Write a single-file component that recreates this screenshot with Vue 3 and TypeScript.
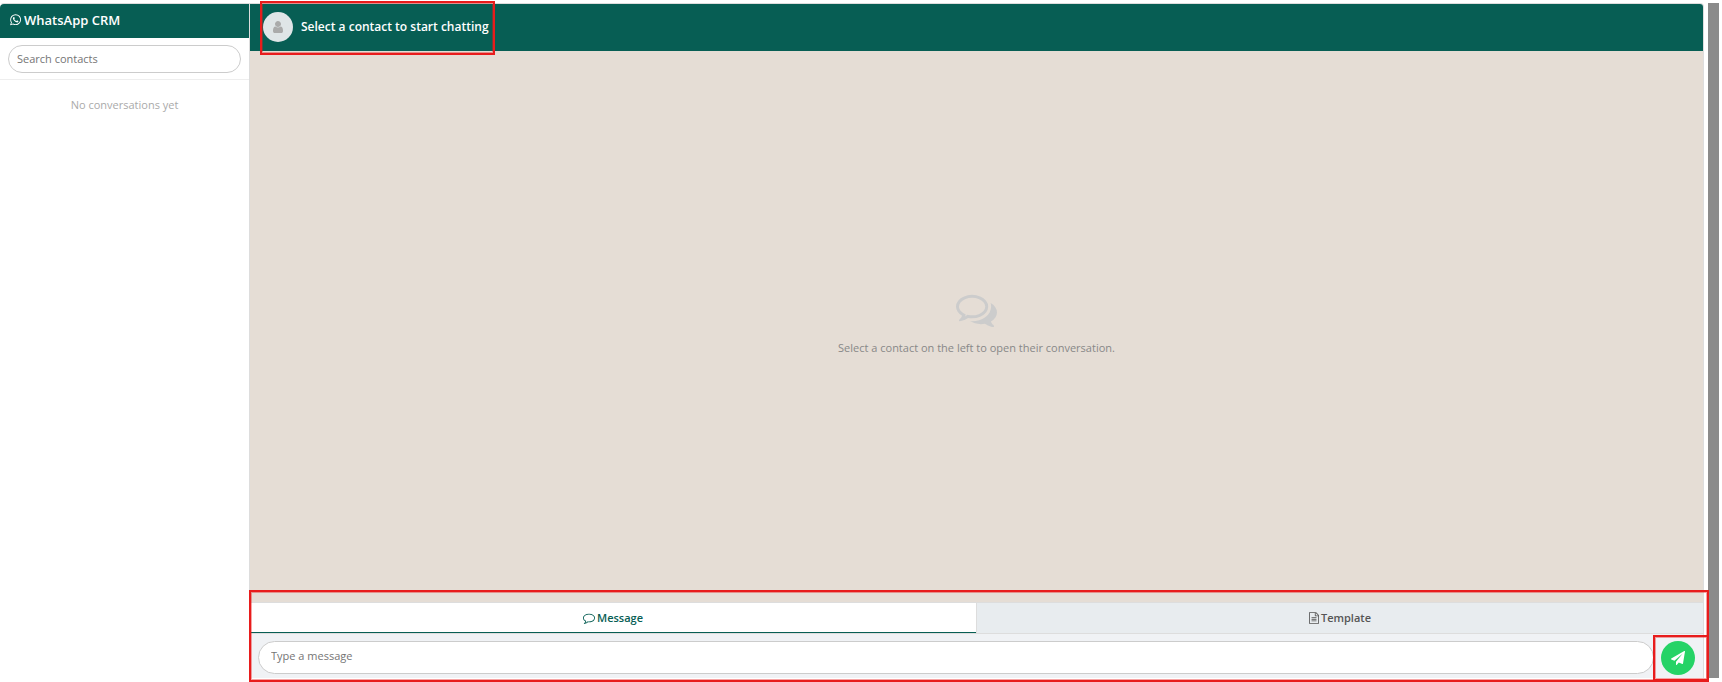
<script setup lang="ts">
import { ref } from 'vue'

type Tab = 'message' | 'template'

const search = ref('')
const draft = ref('')
const activeTab = ref<Tab>('message')
</script>

<template>
  <div class="page">
    <div class="crm">
      <aside class="sidebar">
        <h1 class="brand">
          <svg class="brand-icon" viewBox="0 0 1536 1792" aria-hidden="true">
            <path d="M985 878q13 0 97.5 44t89.5 53q2 5 2 15 0 33-17 76-16 39-71 65.5t-102 26.5q-57 0-190-62-98-45-170-118t-148-185q-72-107-71-194v-8q3-91 74-158 24-22 52-22 6 0 18 1.5t19 1.5q19 0 26.5 6.5t15.5 27.5q8 20 33 88t25 75q0 21-34.5 57.5t-34.5 46.5q0 7 5 15 34 73 102 137 56 53 151 101 12 7 22 7 15 0 54-48.5t52-48.5zm-203 530q127 0 243.5-50t200.5-134 134-200.5 50-243.5-50-243.5-134-200.5-200.5-134-243.5-50-243.5 50-200.5 134-134 200.5-50 243.5q0 203 120 368l-79 233 242-77q158 104 345 104zm0-1382q153 0 292.5 60t240.5 161 161 240.5 60 292.5-60 292.5-161 240.5-240.5 161-292.5 60q-195 0-365-94l-417 134 136-405q-108-178-108-389 0-153 60-292.5t161-240.5 240.5-161 292.5-60z" />
          </svg>
          WhatsApp CRM
        </h1>
        <div class="search">
          <input v-model="search" type="text" placeholder="Search contacts" aria-label="Search contacts" />
        </div>
        <p class="no-items">No conversations yet</p>
      </aside>

      <main class="chat">
        <header class="chat-header">
          <div class="contact">
            <span class="avatar">
              <svg viewBox="0 0 1792 1792" aria-hidden="true">
                <path d="M1536 1399q0 109-62.5 187t-150.5 78h-854q-88 0-150.5-78t-62.5-187q0-85 8.5-160.5t31.5-152 58.5-131 94-89 134.5-34.5q131 128 313 128t313-128q76 0 134.5 34.5t94 89 58.5 131 31.5 152 8.5 160.5zm-256-887q0 159-112.5 271.5t-271.5 112.5-271.5-112.5-112.5-271.5 112.5-271.5 271.5-112.5 271.5 112.5 112.5 271.5z" />
              </svg>
            </span>
            <h2>Select a contact to start chatting</h2>
            <span class="mark mark-contact"></span>
          </div>
        </header>

        <section class="thread">
          <svg class="thread-icon" viewBox="0 0 1792 1792" aria-hidden="true">
            <path d="M704 384q-153 0-286 52t-211.5 141-78.5 191q0 82 53 158t149 132l97 56-35 84q34-20 62-39l44-31 53 10q78 14 153 14 153 0 286-52t211.5-141 78.5-191-78.5-191-211.5-141-286-52zm0-128q191 0 353.5 68.5t256.5 186.5 94 257-94 257-256.5 186.5-353.5 68.5q-86 0-176-16-124 88-278 128-36 9-86 16h-3q-11 0-20.5-8t-11.5-21q-1-3-1-6.5t.5-6.5 2-6l2.5-5 3.5-5.5 4-5 4.5-5 4-4.5q5-6 23-25t26-29.5 22.5-29 25-38.5 20.5-44q-124-72-195-177t-71-224q0-139 94-257t256.5-186.5 353.5-68.5zm822 1169q10 24 20.5 44t25 38.5 22.5 29 26 29.5 23 25q1 1 4 4.5t4.5 5 4 5 3.5 5.5l2.5 5 2 6 .5 6.5-1 6.5q-3 14-13 22t-22 7q-50-7-86-16-154-40-278-128-90 16-176 16-271 0-472-132 58 4 88 4 161 0 309-45t264-129q125-92 192-212t67-254q0-77-23-152 129 71 204 178t75 230q0 120-71 224.5t-195 176.5z" />
          </svg>
          <p>Select a contact on the left to open their conversation.</p>
        </section>

        <footer class="footer">
          <div class="tabs" role="tablist">
            <button
              type="button"
              role="tab"
              class="tab"
              :class="{ active: activeTab === 'message' }"
              :aria-selected="activeTab === 'message'"
              @click="activeTab = 'message'"
            >
              <svg class="tab-icon" viewBox="0 0 1792 1792" aria-hidden="true">
                <path d="M896 384q-204 0-381.5 69.5t-282 187.5-104.5 255q0 112 71.5 213.5t201.5 175.5l87 50-27 96q-24 91-70 172 152-63 275-171l43-38 57 6q69 8 130 8 204 0 381.5-69.5t282-187.5 104.5-255-104.5-255-282-187.5-381.5-69.5zm896 512q0 174-120 321.5t-326 233-450 85.5q-70 0-145-8-198 175-460 242-49 14-114 22h-5q-15 0-27-10.5t-16-27.5v-1q-3-4-.5-12t2-10 4.5-9.5l6-9 7-8.5 8-9q7-8 31-34.5t34.5-38 31-39.5 32.5-51 27-59 26-76q-157-89-247.5-220t-90.5-281q0-130 71-248.5t191-204.5 286-136.5 348-50.5 348 50.5 286 136.5 191 204.5 71 248.5z" />
              </svg>
              Message
            </button>
            <button
              type="button"
              role="tab"
              class="tab"
              :class="{ active: activeTab === 'template' }"
              :aria-selected="activeTab === 'template'"
              @click="activeTab = 'template'"
            >
              <svg class="tab-icon narrow" viewBox="128 0 1536 1792" aria-hidden="true">
                <path d="M1596 380q28 28 48 76t20 88v1152q0 40-28 68t-68 28h-1344q-40 0-68-28t-28-68v-1600q0-40 28-68t68-28h896q40 0 88 20t76 48zm-444-244v376h376q-10-29-22-41l-313-313q-12-12-41-22zm384 1528v-1024h-416q-40 0-68-28t-28-68v-416h-768v1536h1280zm-1024-864q0-14 9-23t23-9h704q14 0 23 9t9 23v64q0 14-9 23t-23 9h-704q-14 0-23-9t-9-23v-64zm736 224q14 0 23 9t9 23v64q0 14-9 23t-23 9h-704q-14 0-23-9t-9-23v-64q0-14 9-23t23-9h704zm0 256q14 0 23 9t9 23v64q0 14-9 23t-23 9h-704q-14 0-23-9t-9-23v-64q0-14 9-23t23-9h704z" />
              </svg>
              Template
            </button>
          </div>
          <form class="composer" @submit.prevent="draft = ''">
            <input v-model="draft" type="text" placeholder="Type a message" aria-label="Type a message" />
            <button type="submit" class="send" aria-label="Send message">
              <svg viewBox="0 0 1792 1792" aria-hidden="true">
                <path d="M1764 11q33 24 27 64l-256 1536q-5 29-32 45-14 8-31 8-11 0-24-5l-453-185-242 295q-18 23-49 23-13 0-22-4-19-7-30.5-23.5t-11.5-36.5v-349l864-1059-1069 925-395-162q-37-14-40-55-2-40 32-59l1664-960q15-9 32-9 20 0 36 11z" />
              </svg>
            </button>
            <span class="mark mark-send"></span>
          </form>
          <span class="mark mark-footer"></span>
        </footer>
      </main>
    </div>
    <div class="scrollbar"></div>
  </div>
</template>

<style>
body {
  margin: 0;
  background: #fff;
}
</style>

<style scoped>
.page {
  box-sizing: border-box;
  display: flex;
  gap: 4px;
  height: 100vh;
  padding: 3px 3px 4px 0;
  font-family: "Open Sans", "Noto Sans", sans-serif;
  font-size: 12px;
  line-height: 18px;
  color: #555;
}

.page * {
  box-sizing: border-box;
}

svg {
  display: block;
  flex: none;
  fill: currentColor;
}

h1,
h2,
p {
  margin: 0;
}

input {
  min-width: 0;
  border: 1px solid #ccc;
  background: #fff;
  font: inherit;
  color: #333;
  outline: none;
}

input::placeholder {
  color: #757575;
  opacity: 1;
}

button {
  margin: 0;
  font: inherit;
  cursor: pointer;
}

.crm {
  flex: 1;
  display: flex;
  min-width: 0;
  border: 1px solid #ddd;
  border-width: 1px 1px 0 0;
  border-radius: 4px 4px 0 0;
}

.sidebar {
  flex: none;
  width: 250px;
  border-right: 1px solid #ddd;
  background: #fff;
}

.brand {
  display: flex;
  align-items: center;
  gap: 3px;
  height: 34px;
  padding: 0 10px 2px;
  border-top-left-radius: 4px;
  background: #075e54;
  color: #fff;
  font-size: 13px;
  font-weight: 600;
}

.brand-icon {
  width: 11px;
  height: 13px;
}

.search {
  display: flex;
  padding: 7px 8px 6px;
  border-bottom: 1px solid #eee;
}

.search input {
  width: 100%;
  height: 28px;
  padding: 0 8px 2px;
  border-radius: 14px;
  font-size: 11px;
}

.no-items {
  padding: 16px 8px;
  color: #aaa;
  font-size: 11px;
  text-align: center;
}

.chat {
  flex: 1;
  display: flex;
  flex-direction: column;
  min-width: 0;
}

.chat-header {
  display: flex;
  align-items: center;
  height: 47px;
  padding: 0 13px 1px;
  border-top-right-radius: 3px;
  background: #075e54;
  color: #fff;
}

.contact {
  position: relative;
  display: flex;
  align-items: center;
  gap: 8px;
}

.contact h2 {
  font-size: 12px;
  font-weight: 600;
}

.avatar {
  display: flex;
  align-items: center;
  justify-content: center;
  width: 30px;
  height: 30px;
  border-radius: 50%;
  background: #dfe5e7;
  color: #aaa;
}

.avatar svg {
  width: 14px;
  height: 14px;
}

.thread {
  flex: 1;
  display: flex;
  flex-direction: column;
  align-items: center;
  justify-content: center;
  gap: 9px;
  padding-bottom: 7px;
  background: #e5ddd5;
  color: #888;
  font-size: 11px;
}

.thread-icon {
  width: 41px;
  height: 41px;
  color: #ccc;
}

.footer {
  position: relative;
  background: #f0f2f5;
}

.tabs {
  display: flex;
  border-top: 1px solid #ddd;
  border-bottom: 1px solid #ddd;
}

.tab {
  flex: 1;
  display: flex;
  align-items: center;
  justify-content: center;
  gap: 2px;
  height: 30px;
  padding: 0;
  border: 0;
  background: #e8ecef;
  color: #555;
  font-size: 11px;
  font-weight: 600;
}

.tab + .tab {
  border-left: 1px solid #ddd;
}

.tab.active {
  border-bottom: 1px solid #075e54;
  background: #fff;
  color: #075e54;
}

.tab-icon {
  width: 12px;
  height: 12px;
}

.tab-icon.narrow {
  width: 10px;
}

.composer {
  position: relative;
  display: flex;
  align-items: flex-start;
  gap: 7px;
  padding: 7px 8px 3px;
}

.composer input {
  flex: 1;
  height: 33px;
  padding: 0 12px 4px;
  border-radius: 17px;
  font-size: 11px;
}

.send {
  display: flex;
  align-items: center;
  justify-content: center;
  width: 34px;
  height: 34px;
  padding: 0;
  border: 0;
  border-radius: 50%;
  background: #25d366;
  color: #fff;
}

.send svg {
  width: 14px;
  height: 14px;
}

.mark {
  position: absolute;
  border: 2px solid #e81c1c;
  box-shadow: inset 0 0 0 1px rgba(232, 28, 28, 0.4);
  pointer-events: none;
}

.mark-contact {
  inset: -11px -6px -13px -3px;
}

.mark-footer {
  inset: -12px -6px -4px -1px;
}

.mark-send {
  top: 1px;
  right: -6px;
  bottom: -3px;
  width: 56px;
}

.scrollbar {
  flex: none;
  width: 11px;
  background: #8b8b8b;
}
</style>
